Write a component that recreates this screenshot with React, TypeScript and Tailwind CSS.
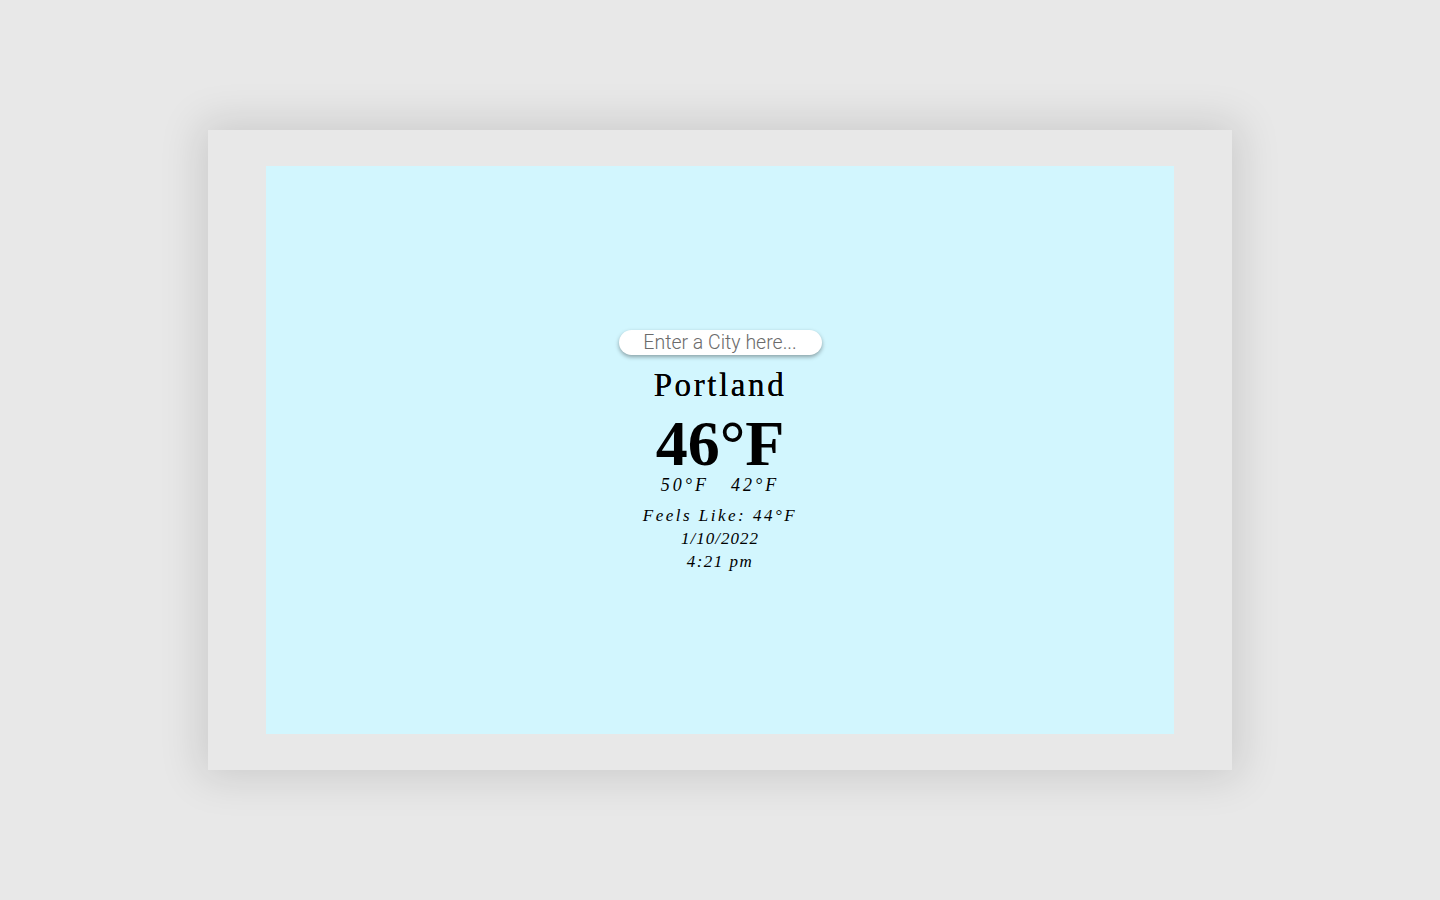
export default function App() {
  return (
    <div className="min-h-screen w-full bg-[#e8e8e8] flex items-center justify-center">
      <div className="w-[1024px] h-[640px] bg-[#e8e8e8] shadow-[0_0_40px_8px_rgba(0,0,0,0.12)] pl-[58px] pt-[36px]">
        <div className="w-[908px] h-[568px] bg-[#d2f6fe] flex flex-col items-center pt-[164px] font-['Liberation_Serif',serif] text-black">
          {/* search */}
          <input
            type="text"
            placeholder="Enter a City here..."
            className="w-[203px] h-[25px] rounded-full bg-white shadow-[0_2px_4px_rgba(0,0,0,0.35)] text-center text-[19.5px] font-light font-['Roboto',sans-serif] placeholder:text-[#6b6b6b] outline-none leading-[25px]"
          />
          <h1 className="mt-[10px] text-[33px] leading-[40px] tracking-[2.6px] [text-shadow:0_0_0.4px_#000]">Portland</h1>
          <div className="mt-[11px] text-[64px] leading-[56px] font-bold">46°F</div>
          <div className="mt-[3px] flex gap-[22px] italic text-[18px] leading-[20px] tracking-[3px]">
            <span>50°F</span>
            <span>42°F</span>
          </div>
          <div className="mt-[9px] flex flex-col items-center italic text-[17px] leading-[23px] tracking-[2.5px]">
            <span>Feels Like: 44°F</span>
            <span className="tracking-[1px]">1/10/2022</span>
            <span className="tracking-[1.5px]">4:21 pm</span>
          </div>
        </div>
      </div>
    </div>
  )
}
